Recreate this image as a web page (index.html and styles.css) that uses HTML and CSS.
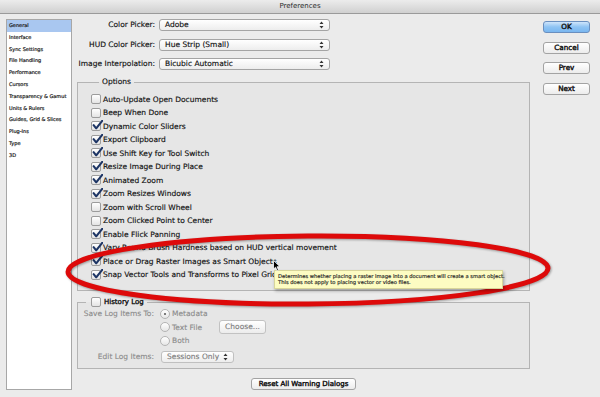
FILE: index.html
```html
<!DOCTYPE html>
<html>
<head>
<meta charset="utf-8">
<title>Preferences</title>
<link rel="stylesheet" href="styles.css">
</head>
<body>
<svg class="defs" width="0" height="0">
	<symbol id="chk" viewBox="0 0 11 10">
		<path d="M1.6 5.2 L4.2 8.3 L10.2 0.8" fill="none" stroke="#1d3565" stroke-width="2.1" stroke-linecap="round" stroke-linejoin="round"/>
	</symbol>
	<symbol id="arr" viewBox="0 0 5 8">
		<path d="M2.5 0.5 L4.5 3 L0.5 3 Z M2.5 7.5 L4.5 5 L0.5 5 Z" fill="#333"/>
	</symbol>
</svg>
<div class="window">
	<div class="titlebar">Preferences</div>
	<div class="content">
		<ul class="sidebar">
			<li class="sel">General</li>
			<li>Interface</li>
			<li>Sync Settings</li>
			<li>File Handling</li>
			<li>Performance</li>
			<li>Cursors</li>
			<li>Transparency &amp; Gamut</li>
			<li>Units &amp; Rulers</li>
			<li>Guides, Grid &amp; Slices</li>
			<li>Plug-Ins</li>
			<li>Type</li>
			<li>3D</li>
		</ul>
		<div class="main">
			<div class="pickers">
				<label>Color Picker:</label><div class="select">Adobe<svg class="arr"><use href="#arr"/></svg></div>
				<label>HUD Color Picker:</label><div class="select">Hue Strip (Small)<svg class="arr"><use href="#arr"/></svg></div>
				<label>Image Interpolation:</label><div class="select">Bicubic Automatic<svg class="arr"><use href="#arr"/></svg></div>
			</div>
			<fieldset class="group options">
				<legend>Options</legend>
				<div class="row"><span class="cb"></span>Auto-Update Open Documents</div>
				<div class="row"><span class="cb"></span>Beep When Done</div>
				<div class="row"><span class="cb"><svg><use href="#chk"/></svg></span>Dynamic Color Sliders</div>
				<div class="row"><span class="cb"><svg><use href="#chk"/></svg></span>Export Clipboard</div>
				<div class="row"><span class="cb"><svg><use href="#chk"/></svg></span>Use Shift Key for Tool Switch</div>
				<div class="row"><span class="cb"><svg><use href="#chk"/></svg></span>Resize Image During Place</div>
				<div class="row"><span class="cb"><svg><use href="#chk"/></svg></span>Animated Zoom</div>
				<div class="row"><span class="cb"><svg><use href="#chk"/></svg></span>Zoom Resizes Windows</div>
				<div class="row"><span class="cb"></span>Zoom with Scroll Wheel</div>
				<div class="row"><span class="cb"></span>Zoom Clicked Point to Center</div>
				<div class="row"><span class="cb"><svg><use href="#chk"/></svg></span>Enable Flick Panning</div>
				<div class="row"><span class="cb"><svg><use href="#chk"/></svg></span>Vary Round Brush Hardness based on HUD vertical movement</div>
				<div class="row"><span class="cb"><svg><use href="#chk"/></svg></span>Place or Drag Raster Images as Smart Objects</div>
				<div class="row"><span class="cb"><svg><use href="#chk"/></svg></span>Snap Vector Tools and Transforms to Pixel Grid</div>
			</fieldset>
			<fieldset class="group history">
				<legend><span class="cb"></span>History Log</legend>
				<div class="hgrid">
					<label>Save Log Items To:</label>
					<div class="radio"><span class="rb on"></span>Metadata</div>
					<span></span>
					<div class="radio"><span class="rb"></span><span class="rtxt">Text File</span><span class="btn choose">Choose...</span></div>
					<span></span>
					<div class="radio"><span class="rb"></span>Both</div>
					<label class="edit">Edit Log Items:</label>
					<div class="select small edit">Sessions Only<svg class="arr"><use href="#arr"/></svg></div>
				</div>
			</fieldset>
			<div class="footer"><span class="btn reset">Reset All Warning Dialogs</span></div>
		</div>
		<div class="buttons">
			<span class="btn ok">OK</span>
			<span class="btn">Cancel</span>
			<span class="btn">Prev</span>
			<span class="btn">Next</span>
		</div>
	</div>

	<svg class="mark" width="600" height="397" viewBox="0 0 600 397">
		<ellipse cx="308" cy="270" rx="240" ry="34" fill="none" stroke="#dd0a0a" stroke-width="5" transform="rotate(-0.4 308 270)"/>
	</svg>
	<div class="tooltip">Determines whether placing a raster image into a document will create a smart object.<br>This does not apply to placing vector or video files.</div>
	<svg class="cursor" width="8" height="12" viewBox="0 0 8 12">
		<path d="M0.5 0.5 L0.5 9 L2.6 7.2 L4.1 10.8 L5.5 10.2 L4.1 6.7 L7 6.7 Z" fill="#000" stroke="#fff" stroke-width="0.8"/>
	</svg>
</div>
</body>
</html>
```
FILE: styles.css
```css
html,body{margin:0;padding:0}
body{background:#ececec;font-family:"DejaVu Sans","Liberation Sans",sans-serif;font-size:7.5px;color:#111;-webkit-text-stroke:0.15px}
.defs{position:absolute}
.window{position:relative;width:600px;height:397px;overflow:hidden;background:#ebebeb}

.titlebar{
	height:13px;line-height:13px;text-align:center;font-size:7px;color:#2a2a2a;
	background:linear-gradient(#ececec,#d0d0d0);
	border-bottom:1px solid #9a9a9a;
	-webkit-text-stroke:0;
}

.content{display:flex;align-items:flex-start;padding:5px 0 0 6px}

.sidebar{
	list-style:none;margin:0;padding:0;
	width:64px;height:369px;background:#fff;border:1px solid #a7a7a7;
	font-size:5px;color:#222;-webkit-text-stroke:0.2px;
}
.sidebar li{height:11.8px;line-height:11.8px;padding-left:2px;white-space:nowrap}
.sidebar li.sel{background:#a9c7f0}

.main{width:453px;margin-left:5px}

.pickers{display:grid;grid-template-columns:78px 171px;column-gap:4px;row-gap:7.5px}
.pickers label{text-align:right;line-height:12px;white-space:nowrap}

.select{
	position:relative;height:10px;line-height:10px;padding-left:5px;
	border:1px solid #a4a4a4;border-radius:3px;
	background:linear-gradient(#ffffff,#ededed);
	white-space:nowrap;
}
.select .arr{position:absolute;right:5px;top:1px;width:5px;height:8px}

.group{margin:0;padding:0;border:1px solid #b4b4b4;background:#e6e6e6;min-width:0}
.group legend{margin-left:8px;padding:0 3px;line-height:10px;height:10px}

.options{margin-top:7px;padding:5.25px 0 9px 13px}
.row{height:13.5px;display:flex;align-items:center;white-space:nowrap}

.cb{
	position:relative;display:inline-block;flex:none;
	width:8px;height:8px;margin-right:2px;
	border:1px solid #9c9c9c;border-radius:2px;
	background:linear-gradient(#ffffff,#e4e4e4);
}
.cb svg{position:absolute;left:0;top:-2px;width:11px;height:10px}

.history{margin-top:5.75px;padding:0 0 5px 0}
.history legend{padding:0 3px 0 5px;display:flex;align-items:center;font-size:7px;-webkit-text-stroke:0.35px}
.history legend .cb{margin-right:3px}
.hgrid{display:grid;grid-template-columns:76px 1fr;column-gap:6px;color:#8a8a8a;-webkit-text-stroke:0.1px}
.hgrid label{text-align:right;line-height:13.5px;white-space:nowrap}
.radio{height:13.5px;display:flex;align-items:center;white-space:nowrap}
.rb{
	display:inline-block;width:8px;height:8px;margin-right:2px;
	border:1px solid #b4b4b4;border-radius:50%;
	background:linear-gradient(#ffffff,#e6e6e6);position:relative;
}
.rb.on::after{content:"";position:absolute;left:3px;top:3px;width:2px;height:2px;border-radius:50%;background:#555}
.rtxt{width:47px}
.hgrid .edit{margin-top:3.25px}
.select.small{width:66px;margin-left:1px;color:#7a7a7a;border-color:#c0c0c0;height:10px;line-height:10px}
label.edit{line-height:12px}

.btn{
	display:block;height:10px;line-height:10px;text-align:center;
	border:1px solid #a3a3a3;border-radius:3px;
	background:linear-gradient(#ffffff,#ececec);
	white-space:nowrap;
}
.choose{display:inline-block;width:45px;color:#7a7a7a;border-color:#c2c2c2;height:12px;line-height:12px}

.footer{display:flex;justify-content:center;margin-top:9px}
.reset{width:103px;font-size:7px;-webkit-text-stroke:0.4px}

.buttons{display:flex;flex-direction:column;gap:8.5px;width:47px;margin-left:13px;margin-top:2px}
.buttons .btn{font-size:7.2px;-webkit-text-stroke:0.4px}
.btn.ok{background:linear-gradient(#cfe5fb,#8ec3f3 50%,#7ab7f0);border-color:#6a8fbf}

.mark{position:absolute;left:0;top:0;filter:drop-shadow(1px 1px 1px rgba(0,0,0,.35))}
.tooltip{
	position:absolute;left:274px;top:270px;width:221px;height:14px;
	padding:1.5px 3px;background:#fdfcc2;border:1px solid #d8d59a;
	font-size:5.2px;line-height:6.6px;color:#222;white-space:nowrap;
	box-shadow:1px 2px 3px rgba(0,0,0,.3);
}
.cursor{position:absolute;left:273px;top:260px}
```
